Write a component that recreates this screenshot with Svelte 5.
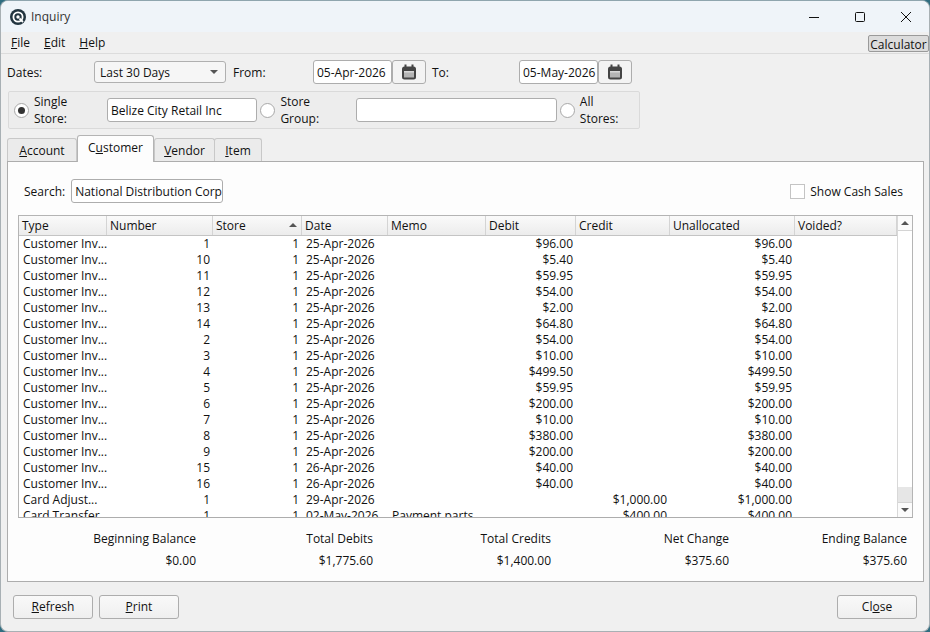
<script>
  const inv = [
    ["1", "25-Apr-2026", "$96.00"],
    ["10", "25-Apr-2026", "$5.40"],
    ["11", "25-Apr-2026", "$59.95"],
    ["12", "25-Apr-2026", "$54.00"],
    ["13", "25-Apr-2026", "$2.00"],
    ["14", "25-Apr-2026", "$64.80"],
    ["2", "25-Apr-2026", "$54.00"],
    ["3", "25-Apr-2026", "$10.00"],
    ["4", "25-Apr-2026", "$499.50"],
    ["5", "25-Apr-2026", "$59.95"],
    ["6", "25-Apr-2026", "$200.00"],
    ["7", "25-Apr-2026", "$10.00"],
    ["8", "25-Apr-2026", "$380.00"],
    ["9", "25-Apr-2026", "$200.00"],
    ["15", "26-Apr-2026", "$40.00"],
    ["16", "26-Apr-2026", "$40.00"]
  ];

  const rows = [
    ...inv.map(([number, date, amt]) => ({
      type: "Customer Inv...",
      number,
      date,
      memo: "",
      debit: amt,
      credit: "",
      unallocated: amt
    })),
    { type: "Card Adjust...", number: "1", date: "29-Apr-2026", memo: "", debit: "", credit: "$1,000.00", unallocated: "$1,000.00" },
    { type: "Card Transfer", number: "1", date: "02-May-2026", memo: "Payment parts", debit: "", credit: "$400.00", unallocated: "$400.00" }
  ];

  const totals = [
    ["Beginning Balance", "$0.00"],
    ["Total Debits", "$1,775.60"],
    ["Total Credits", "$1,400.00"],
    ["Net Change", "$375.60"],
    ["Ending Balance", "$375.60"]
  ];
</script>

{#snippet calendar()}
  <svg width="16" height="16" viewBox="0 0 16 16">
    <rect x="1" y="2.5" width="14" height="13" rx="2.5" fill="#444" />
    <rect x="3" y="7" width="10" height="6.5" fill="#b4b4b4" />
    <rect x="3" y="7" width="10" height="1.5" fill="#d8d8d8" />
    <rect x="3.5" y="0.5" width="2" height="4" fill="#444" />
    <rect x="10.5" y="0.5" width="2" height="4" fill="#444" />
  </svg>
{/snippet}

<div class="window">
  <header class="titlebar">
    <svg class="logo" width="16" height="16" viewBox="0 0 16 16">
      <circle cx="8" cy="8" r="8" fill="#22343f" />
      <circle cx="8" cy="8" r="4.6" fill="none" stroke="#fff" stroke-width="1.8" />
      <circle cx="8" cy="8" r="1.7" fill="#fff" />
      <path d="M9.5 9.5 L13 13" stroke="#fff" stroke-width="1.8" />
    </svg>
    <span class="title">Inquiry</span>
    <div class="controls">
      <svg width="12" height="12" viewBox="0 0 12 12"><path d="M1 6.5h10" stroke="#111" fill="none" /></svg>
      <svg width="12" height="12" viewBox="0 0 12 12"><rect x="1.5" y="1.5" width="9" height="9" rx="1" stroke="#111" fill="none" /></svg>
      <svg width="12" height="12" viewBox="0 0 12 12"><path d="M1 1l10 10M11 1L1 11" stroke="#111" fill="none" /></svg>
    </div>
  </header>

  <nav class="menubar">
    <span><u>F</u>ile</span>
    <span><u>E</u>dit</span>
    <span><u>H</u>elp</span>
    <button class="calc">Calculator</button>
  </nav>

  <div class="content">
    <div class="dates">
      <span class="dates-label">Dates:</span>
      <div class="combo">
        <span>Last 30 Days</span>
        <i class="caret"></i>
      </div>
      <span class="from-label">From:</span>
      <div class="field date">05-Apr-2026</div>
      <button class="cal">{@render calendar()}</button>
      <span class="to-label">To:</span>
      <div class="field date">05-May-2026</div>
      <button class="cal">{@render calendar()}</button>
    </div>

    <div class="stores">
      <span class="radio on"></span>
      <span class="store-label">Single Store:</span>
      <div class="field single">Belize City Retail Inc</div>
      <span class="radio"></span>
      <span class="store-label">Store Group:</span>
      <div class="field group"></div>
      <span class="radio"></span>
      <span class="store-label">All Stores:</span>
    </div>

    <div class="tabs">
      <div class="tab acct"><u>A</u>ccount</div>
      <div class="tab active">C<u>u</u>stomer</div>
      <div class="tab vendor"><u>V</u>endor</div>
      <div class="tab item"><u>I</u>tem</div>
    </div>

    <section class="pane">
      <div class="search">
        <span>Search:</span>
        <div class="field searchbox">National Distribution Corp</div>
        <label class="cash"><span class="check"></span>Show Cash Sales</label>
      </div>

      <div class="table">
        <div class="grid-wrap">
          <div class="row head">
            <div>Type</div>
            <div>Number</div>
            <div class="sorted">Store<i class="sort"></i></div>
            <div>Date</div>
            <div>Memo</div>
            <div>Debit</div>
            <div>Credit</div>
            <div>Unallocated</div>
            <div>Voided?</div>
          </div>
          <div class="body">
            {#each rows as r}
              <div class="row">
                <div>{r.type}</div>
                <div class="num">{r.number}</div>
                <div class="num">1</div>
                <div class="date-cell">{r.date}</div>
                <div class="memo">{r.memo}</div>
                <div class="num">{r.debit}</div>
                <div class="num">{r.credit}</div>
                <div class="num">{r.unallocated}</div>
                <div></div>
              </div>
            {/each}
          </div>
        </div>
        <div class="scrollbar">
          <div class="sb-btn"><i class="up"></i></div>
          <div class="sb-thumb"></div>
          <div class="sb-track"></div>
          <div class="sb-btn"><i class="down"></i></div>
        </div>
      </div>

      <div class="totals">
        {#each totals as [label, value]}
          <div class="total">
            <div>{label}</div>
            <div>{value}</div>
          </div>
        {/each}
      </div>
    </section>

    <footer class="actions">
      <button class="btn"><u>R</u>efresh</button>
      <button class="btn"><u>P</u>rint</button>
      <button class="btn close">Cl<u>o</u>se</button>
    </footer>
  </div>
</div>

<style>
  :global(body) {
    background: #2f6d80;
  }

  .window {
    width: 930px;
    height: 632px;
    box-sizing: border-box;
    display: flex;
    flex-direction: column;
    background: #f0f0f0;
    border-radius: 8px;
    overflow: hidden;
    border: 1px solid #a8b0b4;
    border-top-color: #8fa5ae;
    font: 12px "Open Sans", "Noto Sans", sans-serif;
    color: #111;
  }

  .titlebar {
    height: 31px;
    flex: none;
    display: flex;
    align-items: center;
    padding-left: 9px;
    background: #eff4f9;
  }

  .title {
    margin-left: 5px;
    color: #333;
  }

  .controls {
    margin-left: auto;
    display: flex;
    gap: 34px;
    padding-right: 17px;
  }

  .menubar {
    height: 21px;
    flex: none;
    display: flex;
    align-items: center;
    gap: 14px;
    padding-left: 10px;
    border-bottom: 1px solid #dcdcdc;
    position: relative;
  }

  .calc {
    position: absolute;
    right: 0;
    top: 3px;
    height: 17px;
    width: 61px;
    padding: 0;
    background: #dcdcdc;
    border: 1px solid #9a9a9a;
    border-radius: 2px;
    font: inherit;
    color: #111;
  }

  .content {
    flex: 1;
    display: flex;
    flex-direction: column;
    padding: 6px 6px 0;
    min-height: 0;
  }

  .dates {
    height: 24px;
    display: flex;
    align-items: center;
  }

  .dates-label {
    width: 87px;
  }

  .combo {
    width: 132px;
    height: 22px;
    box-sizing: border-box;
    display: flex;
    align-items: center;
    justify-content: space-between;
    padding: 0 5px;
    background: #f6f6f6;
    border: 1px solid #b0b0b0;
    border-radius: 3px;
  }

  .caret {
    width: 0;
    height: 0;
    border: 4px solid transparent;
    border-top: 4px solid #555;
    border-bottom: 0;
    margin-right: 2px;
  }

  .from-label {
    margin-left: 7px;
    width: 80px;
  }

  .to-label {
    margin-left: 6px;
    width: 87px;
  }

  .field {
    height: 24px;
    box-sizing: border-box;
    display: flex;
    align-items: center;
    padding: 0 3px;
    background: #fff;
    border: 1px solid #adadad;
    border-radius: 3px;
    white-space: nowrap;
  }

  .date {
    width: 79px;
  }

  .cal {
    width: 34px;
    height: 24px;
    box-sizing: border-box;
    padding: 0;
    display: flex;
    align-items: center;
    justify-content: center;
    background: #f3f3f3;
    border: 1px solid #adadad;
    border-radius: 3px;
  }

  .stores {
    width: 632px;
    height: 38px;
    box-sizing: border-box;
    margin-top: 7px;
    margin-left: 1px;
    display: flex;
    align-items: center;
    padding-left: 5px;
    background: #ededed;
    border: 1px solid #dadada;
    border-radius: 2px;
  }

  .radio {
    width: 13px;
    height: 13px;
    flex: none;
    background: #fff;
    border: 1px solid #a8a8a8;
    border-radius: 50%;
    position: relative;
  }

  .radio.on::after {
    content: "";
    position: absolute;
    inset: 3px;
    border-radius: 50%;
    background: #333;
  }

  .store-label {
    margin-left: 5px;
    margin-right: 4px;
  }

  .single {
    width: 151px;
    margin-right: 3px;
  }

  .group {
    width: 202px;
    margin-right: 3px;
  }

  .tabs {
    margin-top: 6px;
    height: 26px;
    display: flex;
    align-items: flex-end;
    position: relative;
  }

  .tab {
    height: 23px;
    box-sizing: border-box;
    display: flex;
    align-items: center;
    justify-content: center;
    background: #ebebeb;
    border: 1px solid #c8c8c8;
    border-bottom: 0;
    border-radius: 3px 3px 0 0;
  }

  .acct {
    width: 70px;
  }

  .vendor {
    width: 61px;
  }

  .item {
    width: 48px;
    margin-left: -1px;
  }

  .tab.active {
    width: 77px;
    height: 27px;
    background: #fdfdfd;
    border-color: #b4b4b4;
    padding-bottom: 3px;
    margin-bottom: -1px;
    z-index: 1;
  }

  .pane {
    width: 917px;
    height: 421px;
    box-sizing: border-box;
    background: #fdfdfd;
    border: 1px solid #adadad;
    padding: 0 10px;
    display: flex;
    flex-direction: column;
  }

  .search {
    height: 24px;
    margin-top: 17px;
    padding-left: 6px;
    display: flex;
    align-items: center;
    gap: 6px;
  }

  .searchbox {
    width: 152px;
  }

  .cash {
    margin-left: auto;
    margin-right: 10px;
    display: flex;
    align-items: center;
    gap: 5px;
  }

  .check {
    width: 13px;
    height: 13px;
    background: #fff;
    border: 1px solid #c4c4c4;
  }

  .table {
    margin-top: 12px;
    height: 303px;
    width: 895px;
    box-sizing: border-box;
    display: flex;
    background: #fff;
    border: 1px solid #b4b4b4;
    border-bottom-color: #adadad;
  }

  .grid-wrap {
    width: 878px;
    display: flex;
    flex-direction: column;
    min-width: 0;
  }

  .row {
    display: grid;
    grid-template-columns: 88px 106px 89px 86px 98px 90px 94px 125px 102px;
    height: 16px;
    line-height: 16px;
    white-space: nowrap;
  }

  .row > div {
    padding: 0 3px 0 4px;
    overflow: hidden;
  }

  .row > .num {
    text-align: right;
  }

  .row > .date-cell {
    padding-left: 4px;
  }

  .row > .memo {
    padding-left: 4px;
    overflow: visible;
  }

  .head {
    height: 20px;
    line-height: 20px;
    flex: none;
    background: linear-gradient(#fafafa, #ececec);
    border-bottom: 1px solid #c4c4c4;
    box-sizing: border-box;
  }

  .head > div {
    padding: 0 3px;
    border-right: 1px solid #d4d4d4;
    box-sizing: border-box;
  }

  .sorted {
    position: relative;
  }

  .sort {
    position: absolute;
    right: 4px;
    top: 7px;
    width: 0;
    height: 0;
    border: 4px solid transparent;
    border-bottom: 4px solid #555;
    border-top: 0;
  }

  .body {
    flex: 1;
    overflow: hidden;
  }

  .scrollbar {
    width: 15px;
    flex: none;
    display: flex;
    flex-direction: column;
    background: #f4f4f4;
    border-left: 1px solid #d8d8d8;
    box-sizing: border-box;
  }

  .sb-btn {
    height: 14px;
    flex: none;
    display: flex;
    align-items: center;
    justify-content: center;
    background: #fbfbfb;
    border-bottom: 1px solid #d4d4d4;
  }

  .sb-btn:last-child {
    border-bottom: 0;
    border-top: 1px solid #d4d4d4;
  }

  .sb-thumb {
    flex: 1;
    background: #fff;
  }

  .sb-track {
    height: 15px;
    background: #e6e6e6;
  }

  .up {
    border: 4px solid transparent;
    border-bottom: 4px solid #555;
    border-top: 0;
  }

  .down {
    border: 4px solid transparent;
    border-top: 4px solid #555;
    border-bottom: 0;
  }

  .totals {
    margin-top: 13px;
    padding-right: 6px;
    display: grid;
    grid-template-columns: 178px 177px 178px 178px 178px;
    text-align: right;
  }

  .total {
    display: flex;
    flex-direction: column;
    gap: 6px;
    line-height: 16px;
  }

  .actions {
    flex: 1;
    display: flex;
    align-items: center;
    gap: 6px;
    padding: 0 6px 0 6px;
  }

  .btn {
    width: 80px;
    height: 24px;
    padding: 0;
    background: linear-gradient(#f9f9f9, #efefef);
    border: 1px solid #adadad;
    border-radius: 3px;
    font: inherit;
    color: #111;
  }

  .close {
    margin-left: auto;
  }
</style>
